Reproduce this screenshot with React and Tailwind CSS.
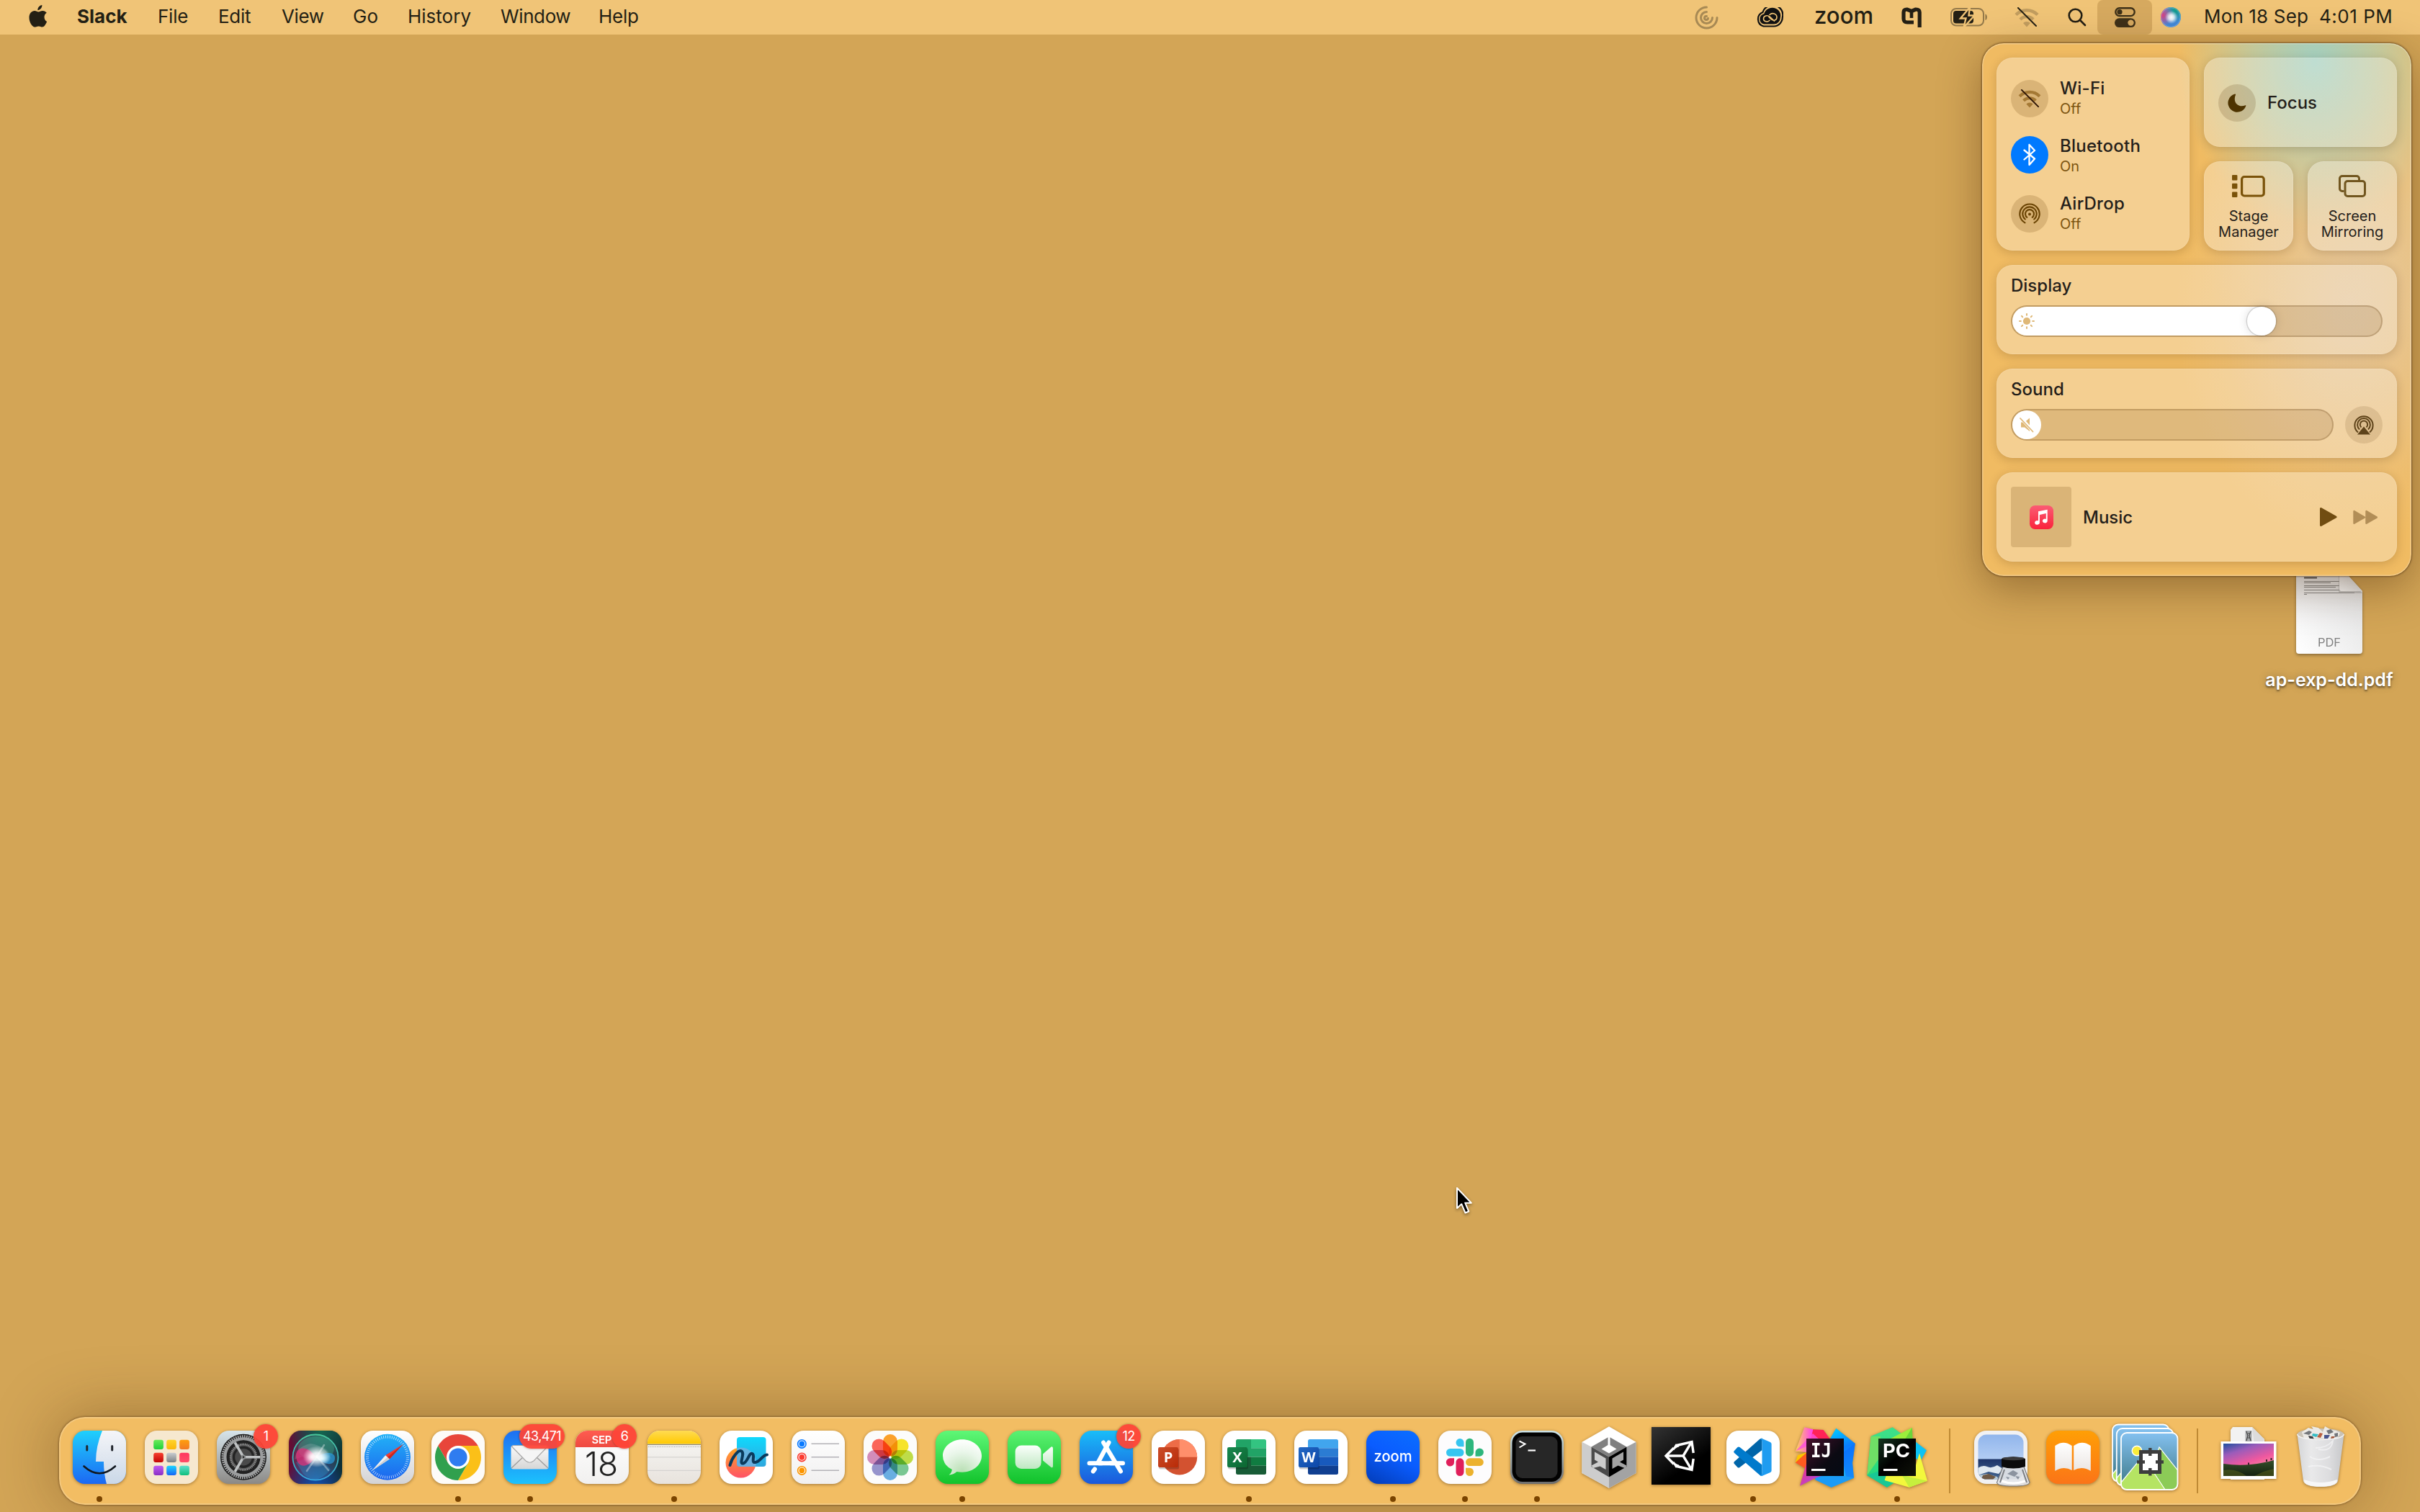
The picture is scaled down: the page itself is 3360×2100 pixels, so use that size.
import React from "react";

const INK = "#231f14";

/* ---------- menu bar glyphs ---------- */

function AppleGlyph() {
  return (
    <svg className="h-[31px] w-[26px]" viewBox="0 0 26 31" fill={INK}>
      <path d="M18.4 0c.2 3.700-2.700 7-6.100 7.200C12 3.700 15 .3 18.400 0z" />
      <path d="M25.100 23.100c-1.600 3.900-3.700 7.500-6.500 7.500-1.800 0-2.500-1.200-4.900-1.200-2.500 0-3.200 1.200-5 1.200C4.700 30.600.5 24 .5 17.400c0-5.900 3.700-9.400 7.500-9.400 2.200 0 4 1.400 5.400 1.400 1.300 0 3.400-1.500 5.900-1.500 2.200 0 4.200 1 5.500 2.900-4.700 2.900-4.100 9.800.3 12.300z" />
    </svg>
  );
}

function SpiralGlyph() {
  return (
    <svg className="h-[33px] w-[33px] opacity-35" viewBox="0 0 33 33" fill="none" stroke={INK} strokeWidth="3" strokeLinecap="round">
      <path d="M16.500 2A14.500 14.500 0 1 0 31 16.500" />
      <path d="M16.500 8.500A8 8 0 1 0 24.500 16.500" />
      <path d="M16.500 14.500A2.500 2.500 0 1 0 18.500 17.500" />
    </svg>
  );
}

function CloudGlyph() {
  return (
    <svg className="h-[28px] w-[39px]" viewBox="0 0 39 28">
      <path d="M11.500 26.500A10.300 10.300 0 0 1 10.500 7 A13.500 12.700 0 0 1 37.800 14 A12 12.500 0 0 1 26 26.500Z" fill="none" stroke="#111" strokeWidth="2.200" />
      <path d="M12 23.600A7.400 7.400 0 0 1 12.300 9.200 A10.900 10.200 0 0 1 34.900 14 A9.200 9.300 0 0 1 26 23.600Z" fill="#111" />
      <path d="M20 18.300C17 21.500 11.500 20 11.500 16c0-4.300 5.500-5.500 8.500-2.800l6.500 6M20 10.500c3.500-3.500 10-1.500 10 3.500 0 4-4.500 5.500-7.500 3l-3.500-3.300" fill="none" stroke="#f0c477" strokeWidth="1.600" strokeLinecap="round" />
    </svg>
  );
}

function HookGlyph() {
  return (
    <svg className="h-[28px] w-[28px]" viewBox="0 0 28 28" fill="none" stroke={INK} strokeWidth="5.200" strokeLinejoin="round">
      <path d="M17 21H8Q3 21 3 16V7Q3 3 7.500 3 L14 5.500 L20 3 Q25.200 3 25.200 7V28" />
      <path d="M14 5.500V15" strokeWidth="4.600" />
    </svg>
  );
}

function BatteryGlyph() {
  return (
    <svg className="h-[26px] w-[52px] overflow-visible" viewBox="0 0 52 26">
      <rect x="1" y="1" width="45" height="23.500" rx="7" fill="none" stroke={INK} strokeOpacity=".45" strokeWidth="2" />
      <path d="M48.500 8.500c3 1 3 7.500 0 8.500z" fill={INK} fillOpacity=".5" />
      <rect x="4" y="4" width="28" height="17.500" rx="4" fill={INK} />
      <path d="M27 -1 L14 14.500H21.500L18.500 27 L33.500 10.500H25.500Z" fill={INK} stroke="#f0c477" strokeWidth="2.400" />
    </svg>
  );
}

function WifiOff({ className, fade, ink }) {
  return (
    <svg className={className} viewBox="0 0 34 28" fill="none">
      <g stroke={fade} strokeWidth="4.400">
        <path d="M2 10.500A21 21 0 0 1 32 10.500" />
        <path d="M8 17A12.500 12.500 0 0 1 26 17" />
      </g>
      <path d="M17 27.500L12 22A7 7 0 0 1 22 22Z" fill={fade} />
      <path d="M5 1L30 26" stroke={ink} strokeWidth="2" strokeLinecap="round" />
    </svg>
  );
}

function SearchGlyph() {
  return (
    <svg className="h-[26px] w-[26px]" viewBox="0 0 26 26" fill="none" stroke={INK} strokeWidth="2.600" strokeLinecap="round">
      <circle cx="10.500" cy="10.500" r="8.800" />
      <path d="M17 17L24 24" />
    </svg>
  );
}

function TogglesGlyph() {
  return (
    <svg className="h-[28px] w-[29px]" viewBox="0 0 29 28">
      <rect x="1.300" y="1.300" width="26.400" height="10.800" rx="5.400" fill="none" stroke="#3d3018" strokeWidth="2.400" />
      <circle cx="7" cy="6.700" r="3.600" fill="#3d3018" />
      <rect x="0" y="15.300" width="29" height="12.700" rx="6.300" fill="#3d3018" />
      <circle cx="22.500" cy="21.600" r="4.200" fill="#d6a95f" />
    </svg>
  );
}

function SiriGlyph() {
  return (
    <svg className="h-[28px] w-[28px]" viewBox="0 0 28 28">
      <defs>
        <radialGradient id="sgA" cx=".1" cy=".4" r=".55"><stop offset="0" stopColor="#d8407f" /><stop offset="1" stopColor="#e0508e" stopOpacity="0" /></radialGradient>
        <radialGradient id="sgB" cx=".75" cy=".15" r=".6"><stop offset="0" stopColor="#0f9c86" /><stop offset="1" stopColor="#1fa894" stopOpacity="0" /></radialGradient>
        <radialGradient id="sgC" cx=".53" cy=".5" r=".32"><stop offset="0" stopColor="#fff" /><stop offset=".4" stopColor="#fff" stopOpacity=".8" /><stop offset="1" stopColor="#fff" stopOpacity="0" /></radialGradient>
      </defs>
      <circle cx="14" cy="14" r="14" fill="#4189d8" />
      <circle cx="14" cy="14" r="14" fill="url(#sgB)" />
      <circle cx="14" cy="14" r="14" fill="url(#sgA)" />
      <circle cx="14" cy="14" r="14" fill="url(#sgC)" />
      <circle cx="14" cy="14" r="13.300" fill="none" stroke="#fff" strokeOpacity=".25" />
    </svg>
  );
}

function MenuBar() {
  return (
    <header className="flex h-12 w-full items-center justify-between bg-[#f0c477] text-[26px] leading-[45px] text-[#231f14]">
      <nav className="flex items-center pb-[3px] pl-10">
        <div className="w-[67px]"><AppleGlyph /></div>
        <span className="w-[112px] font-bold">Slack</span>
        <span className="w-[84px] tracking-[-0.01em]">File</span>
        <span className="w-[88px] tracking-[-0.01em]">Edit</span>
        <span className="w-[99px] tracking-[-0.015em]">View</span>
        <span className="w-[76px]">Go</span>
        <span className="w-[129px]">History</span>
        <span className="w-[136px] tracking-[-0.015em]">Window</span>
        <span className="tracking-[-0.01em]">Help</span>
      </nav>
      <div className="flex items-center">
        <SpiralGlyph />
        <div className="ml-[51px]"><CloudGlyph /></div>
        <div className="ml-[43px]">
          <svg className="h-[36px] w-[82px] overflow-visible" viewBox="0 0 82 36">
            <text x="0" y="27" textLength="82" lengthAdjust="spacingAndGlyphs" fill={INK} fontSize="33" fontWeight="500" fontFamily="Inter, sans-serif">zoom</text>
          </svg>
        </div>
        <div className="ml-[39px]"><HookGlyph /></div>
        <div className="ml-10"><BatteryGlyph /></div>
        <div className="ml-[37px]"><WifiOff className="h-[28px] w-[34px]" fade="#c19d5f" ink={INK} /></div>
        <div className="ml-10"><SearchGlyph /></div>
        <div className="ml-[15px] flex h-12 w-[76px] items-center justify-center rounded-[8px] bg-[#d6a95f]"><TogglesGlyph /></div>
        <div className="ml-[12px]"><SiriGlyph /></div>
        <span className="ml-[32px] w-[160px] pb-[3px] tracking-[0.006em] whitespace-nowrap">Mon 18 Sep</span>
        <span className="w-[140px] pb-[3px] tracking-[0.02em] whitespace-nowrap">4:01 PM</span>
      </div>
    </header>
  );
}

/* ---------- control centre ---------- */

function Card({ className, children }) {
  return (
    <section className={"rounded-[22px] bg-white/30 shadow-[0_3px_14px_rgba(60,30,0,0.2),inset_0_0_0_1px_rgba(255,255,255,0.12)] " + className}>
      {children}
    </section>
  );
}

function AirDropGlyph() {
  return (
    <svg className="h-[30px] w-[30px]" viewBox="0 0 30 30" fill="none" stroke="#6b4404" strokeWidth="2.100" strokeLinecap="round">
      <path d="M8.500 27.300A13.700 13.700 0 1 1 21.500 27.300" />
      <path d="M8.800 22.500A9.700 9.700 0 1 1 21.200 22.500" />
      <path d="M11.300 19.800A6 6 0 1 1 18.700 19.800" />
      <circle cx="15" cy="15.500" r="2" fill="#6b4404" stroke="none" />
    </svg>
  );
}

function BluetoothGlyph() {
  return (
    <svg className="h-[32px] w-[18px]" viewBox="0 0 18 32" fill="none" stroke="#fff" strokeWidth="2.300" strokeLinejoin="round" strokeLinecap="round">
      <path d="M1.500 9.500L16 21.500L8.500 30V2L16 10L1.500 22.500" />
    </svg>
  );
}

function Connection({ title, status, icon, bg, shift }) {
  return (
    <div className="flex h-[54px] items-start">
      <div className={"flex size-[52px] shrink-0 items-center justify-center rounded-full " + bg + " " + shift}>{icon}</div>
      <div className="ml-[16px]">
        <div className="text-[24px] leading-[28px] font-medium tracking-[0.01em] text-[#24201a]">{title}</div>
        <div className="mt-[2px] text-[20px] leading-[24px] text-[#7c5410]">{status}</div>
      </div>
    </div>
  );
}

function StageGlyph() {
  return (
    <svg className="h-[31px] w-[46px]" viewBox="0 0 46 31">
      <g fill="#7a5209">
        <rect x="0" y="0" width="7.400" height="7.400" rx="1" />
        <rect x="0" y="11.800" width="7.400" height="7.400" rx="1" />
        <rect x="0" y="23.600" width="7.400" height="7.400" rx="1" />
      </g>
      <rect x="13.600" y="2.500" width="30.600" height="26.500" rx="3.500" fill="none" stroke="#7a5209" strokeWidth="3.200" />
    </svg>
  );
}

function MirrorGlyph() {
  return (
    <svg className="h-[31px] w-[38px]" viewBox="0 0 38 31" fill="none" stroke="#71561f" strokeWidth="3">
      <path d="M7.500 22.500H5A3.500 3.500 0 0 1 1.500 19V5A3.500 3.500 0 0 1 5 1.500H25A3.500 3.500 0 0 1 28.500 5V7.500" />
      <rect x="9" y="8.500" width="27.500" height="21" rx="3.500" />
    </svg>
  );
}

function SunGlyph() {
  return (
    <svg className="size-[22px]" viewBox="0 0 22 22" stroke="#dfb877" strokeWidth="2" strokeLinecap="round">
      <circle cx="11" cy="11" r="5.100" fill="#dfb877" stroke="none" />
      <path d="M11 1v1.800M11 19.200V21M1 11h1.800M19.200 11H21M3.900 3.900l1.300 1.300M16.800 16.800l1.300 1.300M3.900 18.100l1.300-1.300M16.800 5.200l1.300-1.300" />
    </svg>
  );
}

function MutedGlyph() {
  return (
    <svg className="size-[22px]" viewBox="0 0 22 22">
      <path d="M3 7.500H8L15 1.500V20L8 14.500H3z" fill="#dfb877" />
      <path d="M3 1.500L20 20.500" stroke="#fff" strokeWidth="4.500" />
      <path d="M2 2L19.500 20.500" stroke="#dfb877" strokeWidth="1.800" strokeLinecap="round" />
    </svg>
  );
}

function AirPlayGlyph() {
  return (
    <svg className="h-[27px] w-[28px]" viewBox="0 0 28 27" fill="none" stroke="#5e431a" strokeWidth="2">
      <path d="M6 23.500A12.600 12.600 0 1 1 22 23.500" />
      <path d="M8 19.500A8.900 8.900 0 1 1 20 19.500" />
      <path d="M10.500 16.500A5.200 5.200 0 1 1 17.500 16.500" />
      <path d="M14 15.500L23 26.500H5Z" fill="#5e431a" stroke="none" />
    </svg>
  );
}

function MusicArt() {
  return (
    <div className="flex size-[84px] items-center justify-center rounded-[4px] bg-[#dab477]">
      <svg className="size-[33px]" viewBox="0 0 33 33">
        <defs><linearGradient id="mus" x2="0" y2="1"><stop offset="0" stopColor="#fb5c74" /><stop offset="1" stopColor="#fa233b" /></linearGradient></defs>
        <rect width="33" height="33" rx="7.500" fill="url(#mus)" />
        <path d="M12 8.300L24.700 5.700V21.500a3.400 2.900 0 1 1-1.900-2.600V11L13.900 12.900V23.900a3.400 2.900 0 1 1-1.900-2.600z" fill="#fff" />
      </svg>
    </div>
  );
}

function ControlCentre() {
  return (
    <div className="flex h-[740px] w-[596px] flex-col gap-5 rounded-[30px] bg-[#f0bb62] bg-[radial-gradient(190px_230px_at_462px_25px,rgba(150,210,205,0.85),rgba(165,208,190,0.6)_45%,rgba(190,205,160,0)),radial-gradient(240px_330px_at_510px_370px,rgba(229,200,165,0.75),rgba(231,197,150,0.45)_50%,rgba(231,195,142,0)),radial-gradient(230px_360px_at_540px_250px,rgba(225,200,150,0.6),rgba(225,200,150,0))] p-5 shadow-[0_0_3px_rgba(50,25,0,1),0_16px_60px_rgba(60,30,0,0.4),inset_0_0_0_1.5px_rgba(255,255,255,0.25)]">
      <div className="grid grid-cols-2 gap-5">
        <Card className="flex h-[268px] flex-col gap-[26px] px-5 pt-[29px]">
          <Connection title="Wi-Fi" status="Off" bg="bg-[#dab477]" shift="mt-[2px]" icon={<WifiOff className="h-[26px] w-[32px]" fade="#a47935" ink="#2a1203" />} />
          <Connection title="Bluetooth" status="On" bg="bg-[#007aff]" shift="mt-0" icon={<BluetoothGlyph />} />
          <Connection title="AirDrop" status="Off" bg="bg-[#dab477]" shift="mt-[2px]" icon={<AirDropGlyph />} />
        </Card>
        <div className="grid grid-cols-2 gap-5">
          <Card className="col-span-2 flex h-[124px] items-center px-5 pt-[2px]">
            <div className="flex size-[52px] items-center justify-center rounded-full bg-[#6b4d1e]/20">
              <svg className="h-[26px] w-[26px]" viewBox="0 0 26 26"><path d="M10 .5A12.800 12.800 0 1 0 25.500 16.500 A.8 .8 0 0 0 24.600 16.200 C15 20 6.500 12.500 11 1.600 A.8 .8 0 0 0 10 .5z" fill="#4e3300" /></svg>
            </div>
            <div className="ml-[16px] text-[24px] leading-[28px] font-medium text-[#24201a]">Focus</div>
          </Card>
          <Card className="flex h-[124px] flex-col items-center pt-[19px]">
            <StageGlyph />
            <div className="mt-[15px] text-center text-[20px] leading-[22px] text-[#24201a]">Stage<br />Manager</div>
          </Card>
          <Card className="flex h-[124px] flex-col items-center pt-[19px]">
            <MirrorGlyph />
            <div className="mt-[15px] text-center text-[20px] leading-[22px] text-[#24201a]">Screen<br />Mirroring</div>
          </Card>
        </div>
      </div>
      <Card className="h-[124px] px-5 pt-[15px]">
        <div className="text-[24px] leading-[28px] font-medium text-[#24201a]">Display</div>
        <div className="mt-[13px] flex h-11 rounded-full bg-[#6b3c0a]/15 shadow-[inset_0_0_0_2px_rgba(90,55,10,0.22)]">
          <div className="m-[2px] flex w-[366px] items-center justify-between rounded-full bg-white pl-[9px]">
            <SunGlyph />
            <div className="size-[40px] rounded-full bg-white shadow-[0_0_0_1.5px_rgba(0,0,0,0.12),0_0_14px_rgba(0,0,0,0.15)]" />
          </div>
        </div>
      </Card>
      <Card className="h-[124px] px-5 pt-[15px]">
        <div className="text-[24px] leading-[28px] font-medium text-[#24201a]">Sound</div>
        <div className="mt-[9px] flex items-center gap-4">
          <div className="flex h-11 w-[448px] rounded-full bg-[#6b3c0a]/15 shadow-[inset_0_0_0_2px_rgba(90,55,10,0.22)]">
            <div className="m-[2px] flex size-[40px] items-center justify-center rounded-full bg-white"><MutedGlyph /></div>
          </div>
          <div className="flex size-[52px] items-center justify-center rounded-full bg-[#6b4d1e]/15"><AirPlayGlyph /></div>
        </div>
      </Card>
      <Card className="flex h-[124px] items-center px-5">
        <MusicArt />
        <div className="mt-px ml-[16px] text-[24px] leading-[28px] font-medium text-[#24201a]">Music</div>
        <svg className="mr-[7px] ml-auto h-[26px] w-[80px]" viewBox="0 0 80 26">
          <path d="M1.500 1.500V24.500L22 13Z" fill="#714d12" stroke="#714d12" strokeWidth="3" strokeLinejoin="round" />
          <path d="M47.500 5V21.800L62 13.500ZM64.500 5V21.800L79 13.500Z" fill="#b28e57" stroke="#b28e57" strokeWidth="2.400" strokeLinejoin="round" />
        </svg>
      </Card>
    </div>
  );
}

/* ---------- desktop file ---------- */

function PdfFile() {
  return (
    <div className="flex w-[200px] flex-col items-center">
      <svg className="h-[122px] w-[92px] drop-shadow-[0_2px_2px_rgba(0,0,0,0.35)]" viewBox="0 0 92 122">
        <defs>
          <linearGradient id="pg" x1="0" y1="1" x2="1" y2="0"><stop offset="0" stopColor="#fff" /><stop offset="1" stopColor="#dedede" /></linearGradient>
          <linearGradient id="fold" x1="0" y1="1" x2="1" y2="0"><stop offset="0" stopColor="#fff" /><stop offset="1" stopColor="#cfcfcf" /></linearGradient>
        </defs>
        <path d="M4 0H60L92 35V118a4 4 0 0 1-4 4H4a4 4 0 0 1-4-4V4a4 4 0 0 1 4-4z" fill="url(#pg)" />
        <g fill="#8a8a8a">
          <rect x="11" y="15.500" width="18" height="2" fill="#555" />
          <rect x="11" y="21" width="50" height="1" /><rect x="11" y="23" width="37" height="1" />
          <rect x="11" y="27" width="50" height="1" /><rect x="11" y="29" width="44" height="1" />
          <rect x="11" y="33" width="50" height="1" />
          <rect x="11" y="37" width="70" height="1" /><rect x="11" y="39" width="4" height="1" />
        </g>
        <path d="M59 0V35q0 3 3 3H92Z" fill="#999" opacity=".45" />
        <path d="M60 0V32q0 3 3 3H92Z" fill="url(#fold)" />
        <text x="46" y="112" textAnchor="middle" fontSize="16.500" fill="#808080" fontFamily="Inter, sans-serif">PDF</text>
      </svg>
      <div className="mt-[18px] text-[25px] leading-[36px] font-semibold whitespace-nowrap text-white [text-shadow:0_2px_3px_rgba(0,0,0,0.55),0_0_12px_rgba(0,0,0,0.25)]">ap-exp-dd.pdf</div>
    </div>
  );
}

/* ---------- dock icons, drawn on a 74 x 74 grid ---------- */

const Base = ({ fill }) => <rect width="74" height="74" rx="17" fill={fill} />;

const V = ({ id, a, b }) => (
  <linearGradient id={id} x2="0" y2="1"><stop offset="0" stopColor={a} /><stop offset="1" stopColor={b} /></linearGradient>
);

const Finder = () => (
  <g>
    <defs><V id="fi1" a="#1fd0fc" b="#1c68f3" /><V id="fi2" a="#f5f5f8" b="#cad8e8" /><clipPath id="sq"><rect width="74" height="74" rx="17" /></clipPath></defs>
    <Base fill="url(#fi1)" />
    <path clipPath="url(#sq)" d="M41 0Q32 22 32 43H43Q43 60 47 74H74V0Z" fill="url(#fi2)" />
    <path d="M19.800 21.500V27M54.700 21.500V27" stroke="#21252c" strokeWidth="3" strokeLinecap="round" />
    <path d="M15.500 49.500Q37 69 59 49.500" fill="none" stroke="#111820" strokeWidth="2.600" strokeLinecap="round" />
  </g>
);

const TILES = ["#6bea5a,#1fd13a", "#ffd42b,#fbb70b", "#ff9f0c,#f27a24", "#f8412f,#c20404", "#c9cdd0,#7d8284", "#ff375f,#ff4d68", "#bf5af2,#8a2fc4", "#1ed5ff,#1765f5", "#5ce0cd,#0fbf7d"];
const Launchpad = () => (
  <g>
    <Base fill="#f6e8cf" />
    {TILES.map((t, i) => {
      const [a, b] = t.split(",");
      return (
        <g key={i}>
          <defs><V id={"lp" + i} a={a} b={b} /></defs>
          <rect x={12.200 + (i % 3) * 18} y={12.700 + Math.floor(i / 3) * 18} width="13.700" height="13.300" rx="3" fill={`url(#lp${i})`} />
        </g>
      );
    })}
  </g>
);

const Settings = () => (
  <g>
    <defs><V id="se" a="#d6e4ea" b="#8b8986" /></defs>
    <Base fill="url(#se)" />
    <circle cx="37" cy="36.700" r="32" fill="#1d1d1d" />
    <circle cx="37" cy="36.700" r="28.500" fill="none" stroke="#a7a9aa" strokeWidth="4" strokeDasharray="1.700 1.300" />
    <circle cx="37" cy="36.700" r="25.500" fill="none" stroke="#9b9d9e" strokeWidth="4" />
    <circle cx="37" cy="36.700" r="23" fill="#222" />
    <circle cx="37" cy="36.700" r="18" fill="#5d5d5d" stroke="#8d8d8d" strokeWidth="2.500" strokeDasharray="1.400 1" />
    <circle cx="37" cy="36.700" r="13.500" fill="#4a4a4a" stroke="#242424" strokeWidth="3.400" />
    <path d="M37 36.700H60.500M37 36.700L25.200 16.500M37 36.700L25.200 57" stroke="#bfc2c3" strokeWidth="3.600" />
    <circle cx="37" cy="36.700" r="3.200" fill="#8a8c8d" /><circle cx="37" cy="36.700" r="1.200" fill="#222" />
  </g>
);

const Siri = () => (
  <g>
    <defs>
      <linearGradient id="si1"><stop offset="0" stopColor="#6a0d33" /><stop offset=".5" stopColor="#1f1f4a" /><stop offset="1" stopColor="#0c2f33" /></linearGradient>
      <radialGradient id="si2" cx=".5" cy="1.050" r=".6"><stop offset="0" stopColor="#0f52b0" /><stop offset="1" stopColor="#0f52b0" stopOpacity="0" /></radialGradient>
      <radialGradient id="si3" cx=".6" cy="0" r=".6"><stop offset="0" stopColor="#14684f" /><stop offset="1" stopColor="#14684f" stopOpacity="0" /></radialGradient>
      <radialGradient id="si4"><stop offset="0" stopColor="#fff" /><stop offset=".35" stopColor="#fff" stopOpacity=".85" /><stop offset="1" stopColor="#fff" stopOpacity="0" /></radialGradient>
      <radialGradient id="si5" cx=".8"><stop offset="0" stopColor="#ffc0da" /><stop offset=".5" stopColor="#e0508e" stopOpacity=".9" /><stop offset="1" stopColor="#df2f78" stopOpacity=".75" /></radialGradient>
      <radialGradient id="si6" cx=".3"><stop offset="0" stopColor="#b5f2ff" /><stop offset="1" stopColor="#2a9ee0" stopOpacity=".7" /></radialGradient>
      <V id="si7" a="#48c79a" b="#36a7df" />
    </defs>
    <Base fill="url(#si1)" /><Base fill="url(#si2)" /><Base fill="url(#si3)" />
    <circle cx="37" cy="37" r="31.500" fill="#9fb7c8" fillOpacity=".15" stroke="url(#si7)" strokeWidth="1.800" />
    <ellipse cx="38" cy="25" rx="25" ry="17" fill="#3fd0a0" fillOpacity=".3" />
    <path d="M10 44Q40 30 58 54Q38 78 20 60Z" fill="#2aa9d8" fillOpacity=".3" />
    <path d="M8 40Q10 22 30 18Q50 20 60 40Q44 26 8 40Z" fill="#ffffff" fillOpacity=".14" />
    <path d="M10 35c0-14 17-14 27 1-8 16-26 18-27-1z" fill="url(#si5)" />
    <path d="M64 38c0-9-14-9-26-1 10 11 26 13 26 1z" fill="url(#si6)" />
    <path d="M39 36L55 55M39 36L49 20M39 36L25 56" stroke="#fff" strokeOpacity=".35" strokeWidth="2.500" strokeLinecap="round" />
    <ellipse cx="39" cy="36" rx="19" ry="15" fill="url(#si4)" />
  </g>
);

const Safari = () => (
  <g>
    <defs><V id="sa1" a="#ffffff" b="#d3d3d5" /><V id="sa2" a="#22b2f7" b="#1c65ee" /></defs>
    <Base fill="url(#sa1)" />
    <circle cx="37" cy="36.700" r="32" fill="url(#sa2)" />
    <circle cx="37" cy="36.700" r="28" fill="none" stroke="#fff" strokeOpacity=".75" strokeWidth="4" strokeDasharray=".8 2.130" />
    <path d="M58.800 18.700L34.200 34.200L39.800 39.600Z" fill="#f23b30" />
    <path d="M15.500 55.500L34.200 34.200L39.800 39.600Z" fill="#f2f2f2" />
    <path d="M58.800 18.700L37 36.900L39.800 39.600Z" fill="#c8281f" />
    <path d="M15.500 55.500L37 36.900L39.800 39.600Z" fill="#cfcfd2" />
  </g>
);

const Chrome = () => (
  <g>
    <Base fill="#fdfbf8" />
    <g transform="translate(37 37)">
      <path d="M-27.700-16A32 32 0 0 1 27.700-16L0-16L-13.860 8Z" fill="#e8453a" />
      <path d="M27.700-16A32 32 0 0 1 0 32L13.860 8L0-16Z" fill="#fbc018" />
      <path d="M0 32A32 32 0 0 1-27.700-16L-13.860 8L13.860 8Z" fill="#30a04e" />
      <circle r="16" fill="#fff" /><circle r="12.600" fill="#2f7cf0" />
    </g>
  </g>
);

const Mail = () => (
  <g>
    <defs><V id="ma1" a="#1e6ff2" b="#1cc2fd" /><V id="ma2" a="#fbfbfb" b="#d6d6d6" /></defs>
    <Base fill="url(#ma1)" />
    <rect x="10.500" y="20.500" width="52" height="33" rx="3" fill="url(#ma2)" />
    <path d="M11 52L27 37M62 52L46 37" stroke="#9c9c9c" strokeWidth="1.300" />
    <path d="M11.500 22L31 42Q36.500 46.500 42 42L61.500 22Q60 20.500 58 20.500H15Q13 20.500 11.500 22Z" fill="#f5f5f5" stroke="#a9a9a9" strokeWidth="1.200" />
  </g>
);

const Calendar = () => (
  <g>
    <defs><V id="ca1" a="#ffffff" b="#f1f0ef" /><V id="ca2" a="#ff5c50" b="#ee4a41" /></defs>
    <Base fill="url(#ca1)" />
    <path d="M0 23V17A17 17 0 0 1 17 0H57A17 17 0 0 1 74 17V23Z" fill="url(#ca2)" />
    <text x="22.500" y="17.800" fontSize="15" fontWeight="600" textLength="28" fill="#fff" fontFamily="Inter, sans-serif">SEP</text>
    <text x="36" y="62.500" textAnchor="middle" fontSize="46" fontWeight="300" fill="#222" fontFamily="Inter, sans-serif">18</text>
  </g>
);

const Notes = () => (
  <g>
    <defs><V id="no1" a="#f8f8f6" b="#e8e3dd" /><V id="no2" a="#ffdb52" b="#ffc900" /></defs>
    <Base fill="url(#no1)" />
    <path d="M0 18.500V17A17 17 0 0 1 17 0H57A17 17 0 0 1 74 17V18.500Z" fill="url(#no2)" />
    <path d="M0 19.300H74" stroke="#8d8672" strokeWidth="1.200" />
    <path d="M1 22.500H74" stroke="#a5a29a" strokeWidth="1.200" strokeDasharray="1.200 1.200" />
    <path d="M0 36.800H74M0 55.400H74" stroke="#d5d3d1" strokeWidth="1.300" />
  </g>
);

const Freeform = () => (
  <g>
    <defs><V id="fr1" a="#ffa825" b="#ff5266" /><V id="fr2" a="#10d9fd" b="#2fa7dd" /></defs>
    <Base fill="#fff" />
    <circle cx="29.500" cy="44.500" r="21" fill="url(#fr1)" />
    <rect x="24" y="9" width="40.500" height="41" rx="4" fill="url(#fr2)" />
    <path d="M24 24.500A21 21 0 0 1 50 50H28a4 4 0 0 1-4-4z" fill="#7fb0dd" fillOpacity=".75" />
    <path d="M14.500 48C17 38 26 26 30.500 28.500C36 32 26 47 33 45.500C39 44 41 30 45.500 32C50 34 43 45 50 44C57 43 59 34 66 33.500" fill="none" stroke="#0b3a5c" strokeWidth="4" strokeLinecap="round" strokeLinejoin="round" />
  </g>
);

const Reminders = () => (
  <g>
    <defs><V id="re" a="#ffffff" b="#f1f0f0" /></defs>
    <Base fill="url(#re)" />
    {["#0a7aff", "#fb3b30", "#fb9500"].map((c, i) => (
      <g key={c}>
        <circle cx="14.300" cy={18.400 + i * 18.500} r="5.700" fill="#fff" stroke={c} strokeWidth="1.600" />
        <circle cx="14.300" cy={18.400 + i * 18.500} r="3.800" fill={c} />
        <path d={`M27.500 ${18.200 + i * 18.500}H66`} stroke="#b3b2b7" strokeWidth="1.400" />
      </g>
    ))}
  </g>
);

const Photos = () => (
  <g>
    <Base fill="#fcfcfb" />
    <g className="isolate">
      {["#fb9a1c", "#f5e11a", "#b9d93a", "#6fc38a", "#5ea8e0", "#8e8cc8", "#cf83b5", "#fa5a4d"].map((c, i) => (
        <rect key={c} className="mix-blend-multiply" x="27" y="5" width="20" height="31" rx="10" fill={c} fillOpacity=".93" transform={`rotate(${i * 45} 37 37)`} />
      ))}
      <circle cx="37" cy="37" r="1.800" fill="#fff" />
    </g>
  </g>
);

const Messages = () => (
  <g>
    <defs><V id="me1" a="#5ff777" b="#12c32c" /><radialGradient id="me2" cx=".5" cy=".9" r=".9"><stop offset="0" stopColor="#b9dfb4" /><stop offset=".6" stopColor="#e9f6e9" /><stop offset="1" stopColor="#fff" /></radialGradient></defs>
    <Base fill="url(#me1)" />
    <path d="M37 12.300C52 12.300 64 22.500 64 35S52 57.700 37 57.700Q33 57.700 29.500 57Q25 61 18.500 61.500Q22.500 58.500 22.800 54Q10 47.500 10 35C10 22.500 22 12.300 37 12.300Z" fill="url(#me2)" />
  </g>
);

const FaceTime = () => (
  <g>
    <defs><V id="ft1" a="#5cf172" b="#10c22b" /><V id="ft2" a="#fbfffb" b="#bfe8c2" /></defs>
    <Base fill="url(#ft1)" />
    <rect x="10.600" y="20.500" width="36" height="32.500" rx="8.500" fill="url(#ft2)" />
    <path d="M49 32.500L60.500 22.500Q63 21.500 63 25V49Q63 52 60.500 51L49 41.500Z" fill="url(#ft2)" />
  </g>
);

const AppStore = () => (
  <g>
    <defs><V id="as" a="#19bdf9" b="#1b58dc" /></defs>
    <Base fill="url(#as)" />
    <g stroke="#fff" strokeWidth="6" strokeLinecap="round">
      <path d="M40.500 16.500L26 43.500M21 53.500L18.800 56.500" /><path d="M33 16.500L57 56.500" /><path d="M13.500 45.300H31M43 45.300H60" />
    </g>
    <path d="M26 45.300H48" stroke="#fff" strokeWidth="6" />
  </g>
);

const OfficeBadge = ({ x, id, a, b, letter }) => (
  <g>
    <defs><linearGradient id={id} x2="1" y2="1"><stop offset="0" stopColor={a} /><stop offset="1" stopColor={b} /></linearGradient></defs>
    <rect x={x + 1} y="25" width="28" height="28.500" rx="2" fill="#000" opacity=".2" />
    <rect x={x} y="23" width="28" height="28" rx="2.200" fill={`url(#${id})`} />
    <text x={x + 14} y="44.300" textAnchor="middle" fontSize="20" fontWeight="700" fill="#fff" fontFamily="'Open Sans', sans-serif">{letter}</text>
  </g>
);

const PowerPoint = () => (
  <g>
    <Base fill="#fff" />
    <circle cx="38.500" cy="36.700" r="24.700" fill="#d35230" />
    <path d="M38.500 12A24.700 24.700 0 0 0 13.800 36.700H38.500Z" fill="#ed6c47" />
    <path d="M38.500 12A24.700 24.700 0 0 1 63.200 36.700H38.500Z" fill="#ff8f6b" />
    <OfficeBadge x={9} id="pp" a="#ca4c28" b="#b92b08" letter="P" />
  </g>
);

const Excel = () => (
  <g>
    <Base fill="#fff" />
    <clipPath id="exc"><rect x="19" y="12" width="42" height="49" rx="2.500" /></clipPath>
    <g clipPath="url(#exc)">
      <rect x="19" y="12" width="21" height="24.500" fill="#21a366" /><rect x="40" y="12" width="21" height="12.300" fill="#33c481" />
      <rect x="40" y="24.300" width="21" height="12.200" fill="#21a366" /><rect x="19" y="36.500" width="21" height="25" fill="#185c37" />
      <rect x="40" y="36.500" width="21" height="12.200" fill="#107c41" /><rect x="40" y="48.700" width="21" height="13" fill="#185c37" />
    </g>
    <OfficeBadge x={7} id="ex" a="#18884f" b="#0b6631" letter="X" />
  </g>
);

const Word = () => (
  <g>
    <Base fill="#fff" />
    <clipPath id="woc"><rect x="19" y="12" width="42" height="49" rx="2.500" /></clipPath>
    <g clipPath="url(#woc)">
      <rect x="19" y="12" width="42" height="12.300" fill="#41a5ee" /><rect x="19" y="24.300" width="42" height="12.300" fill="#2b7cd3" />
      <rect x="19" y="36.500" width="42" height="12.300" fill="#185abd" /><rect x="19" y="48.700" width="42" height="13" fill="#103f91" />
    </g>
    <OfficeBadge x={6} id="wo" a="#2368c4" b="#0d47a8" letter="W" />
  </g>
);

const Zoom = () => (
  <g>
    <defs><linearGradient id="zo" x1=".8" y1="0" x2=".3" y2="1"><stop offset="0" stopColor="#0b6cff" /><stop offset=".5" stopColor="#0a5cff" /><stop offset="1" stopColor="#0442c4" /></linearGradient></defs>
    <Base fill="url(#zo)" />
    <text x="10.500" y="43" textLength="53" lengthAdjust="spacingAndGlyphs" fontSize="21.500" fontWeight="500" fill="#fff" fontFamily="Inter, sans-serif">zoom</text>
  </g>
);

const Slack = () => (
  <g>
    <Base fill="#fdfcfd" />
    <g fill="#36c5f0"><rect x="11" y="25" width="24.500" height="10.800" rx="5.400" /><path d="M35.500 22.300H30.200A5.500 5.700 0 1 1 35.500 16.500Z" /></g>
    <g fill="#2eb67d"><rect x="38" y="10.700" width="11" height="25" rx="5.500" /><path d="M51.500 35.700V30.200A5.700 5.600 0 1 1 57.200 35.700Z" /></g>
    <g fill="#ecb22e"><rect x="38" y="38.300" width="24.800" height="10.800" rx="5.400" /><path d="M38 51.700H43.500A5.500 5.700 0 1 1 38 57.500Z" /></g>
    <g fill="#e01e5a"><rect x="24.500" y="38.300" width="11" height="24.700" rx="5.500" /><path d="M22 38.300V43.500A5.600 5.600 0 1 1 16.500 38.300Z" /></g>
  </g>
);

const Terminal = () => (
  <g>
    <defs><V id="te" a="#cfe6ea" b="#6d6d6d" /></defs>
    <Base fill="url(#te)" />
    <rect x="2.500" y="2.500" width="69" height="68.500" rx="14.500" fill="#020202" />
    <rect x="7.500" y="8" width="58" height="58" rx="9" fill="#272727" />
    <path d="M12.500 14.500L20.500 18.500L12.500 23.500" fill="none" stroke="#fff" strokeWidth="2" />
    <path d="M24.500 27.500H35" stroke="#fff" strokeWidth="2.200" />
  </g>
);

const UnityHub = () => (
  <g>
    <path d="M37-5.700L74.500 15.700V59L37 79.700L-.5 59V15.700Z" fill="#fff" />
    <path d="M-.5 15.700L12.500 22.500V50L37 64.500V79.700L-.5 59Z" fill="#cdcdcd" />
    <path d="M74.500 15.700L61.500 22.500V50L37 64.500V79.700L74.500 59Z" fill="#a3a3a3" />
    <path d="M37 8.500L61.500 22.500L37 36.500L12.500 22.500Z" fill="#808080" />
    <path d="M35.500 8V20L26.500 25.500L37 31.500L47.500 25.500L38.500 20V8Z" fill="#fff" />
    <path d="M12.500 22.500L37 36.500V64.500L12.500 50Z" fill="#4b4b4b" />
    <path d="M17 29.500L32.500 38.500V54L24.500 49.500L15 52L12.500 48.500L22 43.500L17 40.500Z" fill="#cdcdcd" />
    <path d="M61.500 22.500L37 36.500V64.500L61.500 50Z" fill="#000" />
    <path d="M57 29.500L41.500 38.500V53L49.500 48.500L60 52.500L61.500 48.500L52 43.500L57 40.500Z" fill="#a3a3a3" />
  </g>
);

const Unity = () => (
  <g>
    <defs><linearGradient id="un" x2=".7" y2="1"><stop offset="0" stopColor="#333" /><stop offset=".75" stopColor="#000" /></linearGradient></defs>
    <rect x="-4" y="-5" width="82" height="80" fill="url(#un)" />
    <g fill="none" stroke="#fff" strokeWidth="3.400">
      <path d="M16 35H40M40 35L51.500 16M40 35L51.500 54" />
      <path d="M27 24L16 35L27 46.500M31 20.500L52 15.500L54.200 31M31 49.500L52 54.500L54.200 39" />
    </g>
    <path d="M25 26L29.500 18.500L35 19.500L34 22.500Q29 24 27.500 27ZM25 44L29.500 51.500L35 50.500L34 47.500Q29 46 27.500 43Z" fill="#fff" />
  </g>
);

const VSCode = () => (
  <g>
    <Base fill="#fff" />
    <path d="M10.500 45.500L15.500 51Q17 52 18.500 51L49.500 27V10.500Q47.500 10.500 46 12L11 43Q9.800 44.300 10.500 45.500Z" fill="#0065a9" />
    <path d="M10.500 28.500L15.500 23Q17 22 18.500 23L49.500 47.500V63Q47.500 63 46 61.500L11 31Q9.800 29.700 10.500 28.500Z" fill="#007acc" />
    <path d="M47 11.500Q48.500 10.500 50 11.200L61 16Q62.600 17 62.600 18.500V55.500Q62.600 57 61 58L50 62.800Q48.500 63.500 47 62.500Q49.500 61.500 49.500 59V15Q49.500 12.500 47 11.500Z" fill="#1f9cf0" />
  </g>
);

const JbText = ({ children, font, width }) => (
  <g>
    <text x="17" y="37" fontSize="26" fontWeight="700" fill="#fff" textLength={width} lengthAdjust="spacingAndGlyphs" fontFamily={font}>{children}</text>
    <rect x="18" y="53" width="19.500" height="3" fill="#fff" />
  </g>
);

const IntelliJ = () => (
  <g>
    <defs>
      <linearGradient id="ij1"><stop offset="0" stopColor="#ffd55a" /><stop offset="1" stopColor="#ff3df0" /></linearGradient>
      <linearGradient id="ij2" x2=".3" y2="1"><stop offset="0" stopColor="#00e8ff" /><stop offset=".5" stopColor="#0a7dff" /><stop offset="1" stopColor="#1fb4f5" /></linearGradient>
      <linearGradient id="ij3" x2="1" y2="1"><stop offset="0" stopColor="#ff2d6c" /><stop offset="1" stopColor="#9b4dff" /></linearGradient>
      <linearGradient id="ij4" x2="1" y2="1"><stop offset="0" stopColor="#45102c" /><stop offset=".6" stopColor="#0b0a12" /><stop offset="1" stopColor="#050a14" /></linearGradient>
    </defs>
    <path d="M52.300-3.300L78.700 17.700L75 45L77 65.700L45.700 78.700L23 68L43 13Z" fill="url(#ij2)" />
    <path d="M78.700 17.700L60 32L66 64L77 65.700L75 45Z" fill="#0a6cff" opacity=".6" />
    <path d="M23 68L60 62L77 65.700L45.700 78.700Z" fill="#1a9bf7" />
    <path d="M20.300-1.700L34.700-1L50 20L13 20Z" fill="#ff2357" />
    <path d="M8.300-4.700L20.300-1.700L13 30L-4.300 28.700Z" fill="url(#ij1)" />
    <path d="M20 4L40 22H11L-4.300 28.700Z" fill="#ff4de0" opacity=".8" />
    <path d="M-4.300 44.300L12 30V54Z" fill="#ff5a1f" /><path d="M-4.300 44.300L-1 34L12 30Z" fill="#ffc400" />
    <path d="M2 76.700L12 42L32 63L23 66Z" fill="url(#ij3)" />
    <rect x="11" y="11" width="52" height="52" fill="url(#ij4)" />
    <JbText font="'DejaVu Sans Mono', monospace" width="29">IJ</JbText>
  </g>
);

const PyCharm = () => (
  <g>
    <defs>
      <linearGradient id="pc1" x2="0" y2="1"><stop offset="0" stopColor="#3fe08a" /><stop offset="1" stopColor="#1fd67a" /></linearGradient>
      <linearGradient id="pc2" x2="1" y2="1"><stop offset="0" stopColor="#12361f" /><stop offset=".5" stopColor="#000" /><stop offset="1" stopColor="#10120a" /></linearGradient>
    </defs>
    <path d="M.7 7.700L30.700-4.700L48 8L40 68L23 78.700L-4.700 62Z" fill="url(#pc1)" />
    <path d="M.7 7.700L14 8L11 40L-4.700 62Z" fill="#6fe066" />
    <path d="M-4.700 62L12 56L35 70L23 78.700Z" fill="#19c795" />
    <path d="M57.800-4.300L58.500 14H22Z" fill="#9bee3c" /><path d="M57.800-4.300L58.500 14L48 12Z" fill="#6bd53a" />
    <path d="M62 15L78 27.300L69.500 42L62 38Z" fill="#0cc3f5" />
    <path d="M68 31.300L79 69.700L53.700 78.700L19.700 69L23 58H60Z" fill="#f3f83c" />
    <path d="M79 69.700L53.700 78.700L44 62Z" fill="#c6ef3d" />
    <rect x="11" y="11" width="52" height="52" fill="url(#pc2)" />
    <JbText font="Inter, sans-serif" width="38">PC</JbText>
  </g>
);

const Preview = () => (
  <g>
    <defs>
      <V id="pr1" a="#90b5ec" b="#b3cdf3" /><V id="pr2" a="#1c3468" b="#466a93" />
      <clipPath id="prc"><rect x="5.500" y="5.500" width="63" height="62" rx="11.500" /></clipPath>
    </defs>
    <Base fill="#f1f1f3" />
    <g clipPath="url(#prc)">
      <rect x="5" y="5" width="64" height="35" fill="url(#pr1)" /><rect x="5" y="39.500" width="64" height="29" fill="url(#pr2)" />
      <path d="M5 52Q12 47 18 50T32 48L40 53L34 60L20 57L5 62Z" fill="#dfe9f0" />
      <path d="M5 62L18 60L32 64L34 68H5Z" fill="#b9cdd8" /><path d="M12 62l8-2 10 4-4 4H10z" fill="#6e5a45" />
    </g>
    <path d="M40 50L31.500 72Q32 77 54 77T77 72L69 50Z" fill="#e3e5e8" fillOpacity=".93" stroke="#77797c" strokeWidth="1.200" />
    <path d="M42 54L36 72M67 54L73 72" stroke="#7c7f83" strokeWidth="2" />
    <path d="M46 60l8-5 7 4-5 5zM44 64l5 1-2 3zM57 63l6 1-2 4z" fill="#8b939f" />
    <path d="M38 70Q54 76 71 70" fill="none" stroke="#fff" strokeWidth="3" />
    <path d="M38 39Q54 33.500 71 39V50Q54 55 38 50Z" fill="#0b0b0c" />
    <ellipse cx="54.300" cy="38.800" rx="15.500" ry="2.400" fill="#3a3a3c" />
  </g>
);

const Books = () => (
  <g>
    <defs><V id="bo1" a="#ff9f05" b="#fb7418" /><V id="bo2" a="#ffffff" b="#ebe6e3" /></defs>
    <Base fill="url(#bo1)" />
    <path d="M12.300 21Q24 12.500 35.700 21V55Q24 48.500 12.300 56Z" fill="url(#bo2)" />
    <path d="M38.200 21Q50 12.500 61.800 21V56Q50 48.500 38.200 55Z" fill="url(#bo2)" />
  </g>
);

const Frame = ({ x, y }) => (
  <g transform={`translate(${x} ${y})`}>
    <rect x="0" y="0" width="78.500" height="79" rx="8" fill="url(#stk)" />
    <path d="M0 69L32 30L62 79H8Q0 79 0 71Z" fill="#b5e463" stroke="#fff" strokeWidth="1.200" />
    <path d="M42 50L53 20L78.500 52V71Q78.500 79 70.500 79H61Z" fill="#8ccb57" stroke="#fff" strokeWidth="1.200" />
    <rect x="0" y="0" width="78.500" height="79" rx="8" fill="none" stroke="#fff" strokeWidth="1.800" />
  </g>
);

const Snapshots = () => (
  <g>
    <defs><V id="stk" a="#84c1f0" b="#3b7683" /></defs>
    <Frame x={-8} y={-8.500} /><Frame x={-2.200} y={-3} /><Frame x={4} y={3} />
    <circle cx="26" cy="28" r="6.800" fill="#f9ec3b" stroke="#fff" strokeWidth="1.400" />
    <rect x="31.500" y="29.500" width="26" height="28" fill="#fff" stroke="#3d3d3d" strokeWidth="5" />
    <path d="M44.300 24V35M44.300 52V62.500M26 43.500H37M52 43.500H63" stroke="#3d3d3d" strokeWidth="4.400" />
  </g>
);

const PictureStack = () => (
  <g>
    <defs>
      <linearGradient id="ps1" x2=".5" y2="1"><stop offset="0" stopColor="#1d4fa0" /><stop offset=".3" stopColor="#9a5cba" /><stop offset=".65" stopColor="#f0589f" /><stop offset="1" stopColor="#ff9aa0" /></linearGradient>
      <V id="ps2" a="#35502a" b="#14200f" />
    </defs>
    <path d="M12-1L15-5H42L59 12V68H12Z" fill="#f2f2f2" />
    <path d="M42-5L59 12L58 15H44Z" fill="#dcdcdc" />
    <rect x="32.500" y="0" width="9" height="16" fill="#a9abad" /><path d="M34 1L36 7L34 14M40 1L38 7L40 14M36 4h3M36 10h3" stroke="#444" strokeWidth="1.200" fill="none" />
    <rect x="-1.500" y="15" width="77" height="52" fill="#fff" />
    <rect x="2" y="18" width="70" height="45" fill="url(#ps1)" />
    <path d="M2 46Q22 49 40 47Q58 45 72 41V63H2Z" fill="url(#ps2)" />
    <path d="M2 55Q20 52 34 63H2ZM45 63Q60 55 72 53V63Z" fill="#5c641c" opacity=".5" />
    <path d="M37 44.500v3M62 40v3M68.500 38v3" stroke="#3b1d2b" strokeWidth="2" />
  </g>
);

const Trash = () => (
  <g>
    <defs><linearGradient id="tr"><stop offset="0" stopColor="#d5d6d8" /><stop offset=".3" stopColor="#e9e9ea" /><stop offset=".7" stopColor="#dcdcde" /><stop offset="1" stopColor="#c6c7c9" /></linearGradient></defs>
    <ellipse cx="37" cy="5" rx="32.500" ry="8" fill="#c9c2b6" />
    <path d="M11 2L20-4L27-2L24-6L34-4L40 2L43-6L52-1L58 0L64 3L60 11H14Z" fill="#eceae6" />
    <path d="M13 4l8-4 4 2-4 4zM45 0l6-2 4 4-7 3zM56 4l5-1v5l-4 1z" fill="#73767b" />
    <path d="M26 4l8 1-3 4-6-2z" fill="#35bcc4" /><path d="M36 3l4 1-3 6-5-1z" fill="#b9603f" /><path d="M42 6l8 0-3 5h-5z" fill="#46548e" /><path d="M20 7l6 1 2 4h-6z" fill="#3c3e42" /><path d="M52 8l5 0-2 3h-4z" fill="#a2583c" />
    <path d="M4.500 5Q6 12 37 12.500Q68 12 69.500 5L61 70Q58 78 37 78T13 70Z" fill="url(#tr)" />
    <path d="M14 68Q37 76 60 68L59.500 72Q55 77.500 37 77.500T14.500 72Z" fill="#f7f7f8" />
    <path d="M30 24Q46 24 54 14Q52 30 34 26M22 36Q34 44 50 36M20 50Q36 46 52 54" fill="none" stroke="#f5f5f6" strokeWidth="2" opacity=".7" />
    <path d="M4.500 5Q6 12 37 12.500Q68 12 69.500 5" fill="none" stroke="#f3f3f3" strokeWidth="1.300" />
  </g>
);

function DockItem({ icon, running, badge, tight }) {
  return (
    <div className={"relative h-[122px] w-[100px] " + (tight ? "-ml-[2px]" : "")}>
      <svg className="mt-[19px] ml-[13px] size-[74px] overflow-visible drop-shadow-[0_1px_2px_rgba(60,30,0,0.45)]" viewBox="0 0 74 74">{icon}</svg>
      {badge && (
        <span className="absolute top-[10px] right-[2px] flex h-[34px] min-w-[34px] items-center justify-center rounded-full bg-[#fd4538]/95 px-[5px] text-[18px] leading-[34px] tracking-[-0.035em] text-white shadow-[0_0_3px_rgba(60,30,0,0.5)]">{badge}</span>
      )}
      {running && <span className="absolute top-[110px] left-[46px] size-2 rounded-full bg-[#7a4400]" />}
    </div>
  );
}

const Separator = () => (
  <div className="flex h-[122px] w-11 justify-center pt-4"><div className="h-[90px] w-[2px] translate-x-px bg-[#bf8a35]" /></div>
);

function Dock() {
  return (
    <div className="flex h-[122px] w-[3196px] rounded-[36px] bg-[#f2bd63] pl-[6px] shadow-[0_0_3px_rgba(60,30,0,0.8),0_0_90px_rgba(60,30,0,0.36),inset_0_0_0_2px_rgba(255,255,255,0.18)]">
      <DockItem icon={<Finder />} running />
      <DockItem icon={<Launchpad />} />
      <DockItem icon={<Settings />} badge="1" />
      <DockItem icon={<Siri />} />
      <DockItem icon={<Safari />} />
      <DockItem icon={<Chrome />} running tight />
      <DockItem icon={<Mail />} running badge="43,471" />
      <DockItem icon={<Calendar />} badge="6" />
      <DockItem icon={<Notes />} running />
      <DockItem icon={<Freeform />} />
      <DockItem icon={<Reminders />} />
      <DockItem icon={<Photos />} />
      <DockItem icon={<Messages />} running />
      <DockItem icon={<FaceTime />} />
      <DockItem icon={<AppStore />} badge="12" />
      <DockItem icon={<PowerPoint />} />
      <DockItem icon={<Excel />} running tight />
      <DockItem icon={<Word />} />
      <DockItem icon={<Zoom />} running />
      <DockItem icon={<Slack />} running />
      <DockItem icon={<Terminal />} running />
      <DockItem icon={<UnityHub />} />
      <DockItem icon={<Unity />} />
      <DockItem icon={<VSCode />} running />
      <DockItem icon={<IntelliJ />} />
      <DockItem icon={<PyCharm />} running />
      <Separator />
      <DockItem icon={<Preview />} />
      <DockItem icon={<Books />} />
      <DockItem icon={<Snapshots />} running />
      <Separator />
      <DockItem icon={<PictureStack />} />
      <DockItem icon={<Trash />} />
    </div>
  );
}

/* ---------- desktop ---------- */

export default function App() {
  return (
    <div className="relative flex h-[2100px] w-[3360px] flex-col overflow-hidden bg-[#d3a556] font-['Inter',sans-serif]">
      <MenuBar />
      <main className="flex flex-1 justify-end">
        <div className="pt-[738px] pr-[26px]"><PdfFile /></div>
      </main>
      <div className="flex justify-center pb-[10px]"><Dock /></div>
      <div className="absolute top-[60px] left-[2752px]"><ControlCentre /></div>
      <svg className="absolute top-[1647px] left-[2020px] h-[42px] w-[28px] drop-shadow-[0_2px_2px_rgba(0,0,0,0.4)]" viewBox="0 0 28 42">
        <path d="M3 3V31L9.300 25.300L14.500 37.500L19.200 35.500L14.200 23.700H22.800Z" fill="#000" stroke="#fff" strokeWidth="2" strokeLinejoin="round" />
      </svg>
    </div>
  );
}
